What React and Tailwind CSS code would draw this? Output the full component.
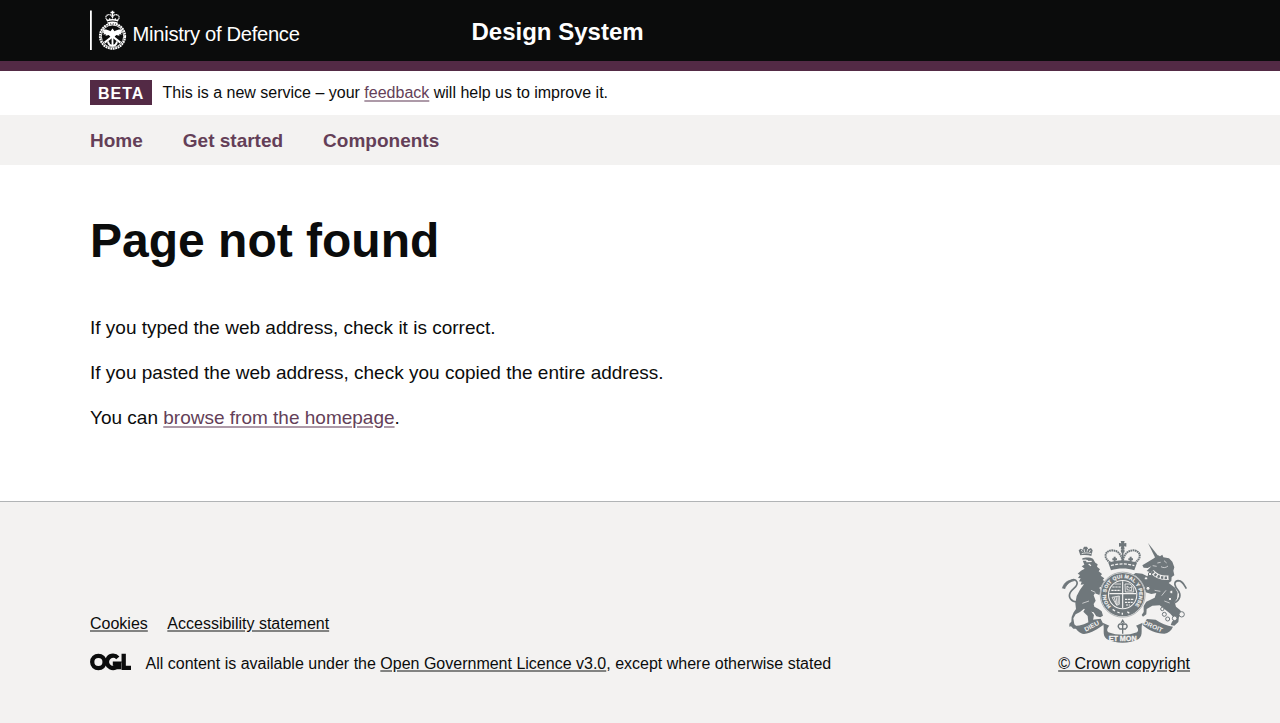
import React from "react";

const link = "underline decoration-2 underline-offset-2 decoration-[#ad9aa8] text-[#643f58]";
const footerLink = "underline decoration-2 underline-offset-1 decoration-[#828382]";

function MinistryLogo() {
  return (
    <svg width="210" height="40" viewBox="0 0 210 40" role="img" aria-label="Ministry of Defence" className="block overflow-visible">
      <rect x="0" y="0.5" width="1.8" height="39.5" fill="#fff" />
      <g fill="none" stroke="#fff">
        <circle cx="22.5" cy="26.2" r="12.6" strokeWidth="2" strokeDasharray="1.9 0.6" />
        <circle cx="22.5" cy="26.2" r="11.2" strokeWidth="0.9" />
        <path d="M22.5 0.8v6M20.5 2.6h4" strokeWidth="1.5" />
        <path d="M17.4 10.2C14.2 7.2 16.4 4 20.3 4.8c1.5.4 2.2 2 2.2 3.8 0-1.8.7-3.4 2.2-3.8 3.9-.8 6.1 2.4 2.9 5.4" strokeWidth="1.2" strokeDasharray="1.4 .35" />
        <path d="M16.9 10.7c3.2-1 8-1 11.2 0M17.5 13.1c3-1 7-1 10 0" strokeWidth="1.5" />
        <path d="M19.7 8.2v2M25.3 8.2v2" strokeWidth="1.2" />
        <path d="M22.5 24v12.5" strokeWidth="1.8" />
        <path d="M18 31.5c.5 3 2.1 4.3 4.5 4.3s4-1.3 4.5-4.3" strokeWidth="1.9" />
        <path d="M14.6 32.6l14-11M30.4 32.6l-14-11" strokeWidth="2" />
      </g>
      <path
        d="M22.5 18.6l2 2.6c2.6-1.7 5-2 8.4-1.6l-1.5 1.6 1.6 1-2.2.7 1 1.5-2.7-.2.4 1.6-3.5-.8-1.8 2.2h-3.4L19 25l-3.5.8.4-1.6-2.7.2 1-1.5-2.2-.7 1.6-1-1.5-1.6c3.4-.4 5.8-.1 8.4 1.6z"
        fill="#fff"
      />
      <text
        x="42.6"
        y="30.7"
        textLength="167"
        lengthAdjust="spacingAndGlyphs"
        fill="#fff"
        fontSize="20.4"
        letterSpacing="-0.3"
        fontFamily="'Liberation Sans', Arial, sans-serif"
      >
        Ministry of Defence
      </text>
    </svg>
  );
}

function OglLogo() {
  return (
    <svg width="42" height="18" viewBox="0 0 42 18" role="img" aria-label="OGL" className="block overflow-visible">
      <g fill="none" stroke="#0b0c0c" strokeWidth="4.3">
        <circle cx="8.4" cy="9" r="6.2" />
        <path d="M27.8 4.8A6.2 6.2 0 1 0 29.1 10.6H22.8M29.2 9.5V16.2" />
        <path d="M33.7 0.8V14.9H41" />
      </g>
    </svg>
  );
}

function RoyalArms() {
  return (
    <svg width="130" height="105" viewBox="0 0 390 315" aria-hidden="true" className="block">
      <defs>
        <path id="garter" d="M154 200A49.5 49.5 0 1 1 222 200" />
      </defs>
      <g fill="#6f777b">
        {/* lion */}
        <path d="M61 46l-5-15 6-5 6 3 4-9h9l4 8 8-4 5 7-4 17c-10-4-22-4-33-2z" />
        <path d="M66 56c10-5 25-4 33 0l7 12 7 5-2 7 9 8-4 6 10 8-4 5 11 8-5 5 10 7-8 2 9 10-5 4-10-4-6 4 5 12-5 10-13-5-4 6 6 16-6 10 2 8 13 7 9 7 4 13-8 5-12-3-8-12-17-4-12-7-12 10-13 7-7 12 3 18 9 8-2 5H40l-7-7-5 1v-9l6-6 1-14 6-14 7-10-2-17 4-22 10-19 12-16-10 1 3-9-8-1 5-9-8-1 6-9-7-4 10-9 11-6-9-7 8-5z" />
        <path d="M112 126l7-6 10 4 7 6 5 10-4 7-9-1-9-9z" />
        <path d="M76 205l15 6 11 14-3 16 8 9-13 4-9-8-2-18-13-13z" />
        {/* unicorn */}
        <path d="M264 9l29 37-7 8z" />
        <path d="M282 55l11-10 7 4 7-5 3 8 17 3 10 10 6 17-3 10 3 14-8 5-1 12-8 6 19 14 8 15-2 18-7 10 4 14 13 11 5 12-9 7-2 16-12 11-11-2 4-10 8-9-13-15-15-12-17-13-22 1-17 10-1 16-10 7-4-5 6-9v-18l8-13 25-12 5-14-15 3-17-5-4-16-12-8-9 13-12-3-3-8 12-2 9-15-12-4-11 7-7-4 4-8 15-10 20 2 15 8 8-13-10-3 14-14-11 5-12-1-4-7z" />
        {/* crown */}
        <path d="M182 3h12l-2 7 7-1v11l-7-1 2 9h-12l2-9-7 1V9l7 1z" />
        <path d="M145 68c25-10 61-10 86 0l-8 23c-22-7-48-7-70 0z" />
        <circle cx="188" cy="33" r="6" />
        {/* scrolls */}
        <path d="M44 258c19 0 37-8 54-19l24-3 9 18c-18 13-35 24-59 28-14-2-23-11-28-24z" />
        <path d="M339 260c-19-3-36-10-52-21l-26-2-14 17c19 16 40 27 66 27 12-2 21-9 26-21z" />
        <path d="M128 248l20 9c-6 7-9 13-3 20 26 10 60 10 86 0 6-7 3-13-3-20l20-9c-8 16 4 36-12 49-28 15-69 15-96 0-16-13-4-33-12-49z" />
      </g>
      <g fill="none" stroke="#6f777b">
        <path d="M52 186c-18-1-29-14-21-29 8-13 24-17 20-31-6-13-24-6-35 11" strokeWidth="5" />
        <path d="M7 145c4-17 20-29 36-23-14 3-23 10-29 25" fill="#6f777b" strokeWidth="2" />
        <path d="M344 188c17-9 20-24 10-37-10-12-15-26 0-29 14 0 18 12 25 24" strokeWidth="5" />
        <path d="M188 70V35" strokeWidth="5" />
        <path d="M151 68c-23-15-16-36 5-37 18 0 29 13 32 35 3-22 14-35 32-35 21 1 28 22 5 37" strokeWidth="6" strokeDasharray="5 1.5" />
        <path d="M164 68V50m-7 8h14M212 68V50m-7 8h14" strokeWidth="6" />
        {/* fleur-de-lis */}
        <path d="M188 248v33M188 255c-11-9-18 4-9 11M188 255c11-9 18 4 9 11M178 267h20M183 249l5-8 5 8" strokeWidth="4" />
      </g>
      {/* garter and shield */}
      <circle cx="188" cy="164" r="69" fill="#f3f2f1" />
      <circle cx="188" cy="164" r="54.5" fill="none" stroke="#6f777b" strokeWidth="21" />
      <circle cx="188" cy="164" r="67.5" fill="none" stroke="#6f777b" strokeWidth="1.5" />
      <circle cx="188" cy="164" r="41" fill="#6f777b" />
      <g fill="#f3f2f1" fontFamily="'Liberation Sans', Arial, sans-serif" fontWeight="700">
        <text fontSize="15" stroke="#f3f2f1" strokeWidth="0.5">
          <textPath href="#garter" startOffset="1" textLength="230" lengthAdjust="spacing">HONI SOIT QUI MAL Y PENSE</textPath>
        </text>
        <text fontSize="19" textLength="48" lengthAdjust="spacingAndGlyphs" transform="translate(77 275) rotate(-28)">DIEU</text>
        <text fontSize="19" textLength="62" lengthAdjust="spacingAndGlyphs" transform="translate(248 252) rotate(24)">DROIT</text>
        <text x="146" y="302" fontSize="20" textLength="84" lengthAdjust="spacingAndGlyphs" stroke="#f3f2f1" strokeWidth="0.8">ET MON</text>
      </g>
      <g fill="none" stroke="#f3f2f1">
        <path d="M148 161h80M188 124v80" strokeWidth="3.5" />
        <path d="M157 141h25M154 151h28M195 178h27M195 187h23M198 195h12" strokeWidth="3.5" strokeDasharray="7 2" />
        <path d="M163 132h20M195 132h15l11 12v12h-25z" strokeWidth="2.5" />
        <path d="M201 149v-11l8 6 6-4v12z" strokeWidth="2.5" />
        <path d="M156 172l22-4v25l-8 3zM162 171l8 24M168 170l4 24M174 169l1 22" strokeWidth="2.5" />
        <path d="M158 208l7 5M172 216l7 3M187 218v6M202 215l6 5" strokeWidth="4" />
        <path d="M65 41c8-3 20-3 29 0M67 35l-3-5M74 36l-2-9M81 35l2-8M88 36l3-6" strokeWidth="2.5" />
        <path d="M65 61l12-1 7 3M79 65l16-1M86 72l7 5" strokeWidth="3.5" />
        <path d="M292 69l10-2M278 77l12 2M303 80c7 4 14 4 21-2M312 62l8 7" strokeWidth="2" />
        <path d="M276 94c13 16 29 21 50 19" strokeWidth="13" />
        <path d="M153 77c23-7 47-7 70 0" strokeWidth="4" strokeDasharray="9 4" />
        <path d="M58 140l-8 23M93 151l13 6M67 190l20-7M318 151l-13 16M329 189l-16-6M284 151l17 3" strokeWidth="2" />
      </g>
      <path d="M276 94c13 16 29 21 50 19" fill="none" stroke="#6f777b" strokeWidth="8" strokeDasharray="7 4" />
      <g fill="#f3f2f1" stroke="#6f777b" strokeWidth="3">
        <circle cx="270" cy="102" r="5" />
        <circle cx="258" cy="115" r="5" />
        <circle cx="264" cy="145" r="6" />
        <circle cx="334" cy="156" r="5" />
        <circle cx="330" cy="177" r="5" />
        <circle cx="307" cy="207" r="5" />
        <circle cx="313" cy="223" r="6" />
        <circle cx="323" cy="237" r="6" />
        <circle cx="344" cy="235" r="7" />
        <circle cx="365" cy="223" r="8" />
      </g>
    </svg>
  );
}

export default function App() {
  return (
    <div className="flex h-[723px] flex-col bg-white font-['Liberation_Sans',Arial,sans-serif] text-[#0b0c0c]">
      <header className="h-[71px] shrink-0 border-b-10 border-[#532a45] bg-[#0b0c0c] px-[90px]">
        <div className="flex pt-[10px] text-white">
          <div className="w-[381.5px]">
            <MinistryLogo />
          </div>
          <div className="pt-[7px] text-[24px] leading-[30px] font-bold">Design System</div>
        </div>
      </header>

      <div className="flex h-[44px] shrink-0 items-start px-[90px] pt-[9px]">
        <strong className="mr-[10px] flex h-[25px] w-[62px] items-center bg-[#532a45] pt-[2px] pl-2 text-[16px] leading-4 tracking-[1px] text-white">
          BETA
        </strong>
        <span className="mt-[3px] pl-[0.5px] text-[16px] leading-5">
          This is a new service – your{" "}
          <a href="#feedback" className={link}>feedback</a> will help us to improve it.
        </span>
      </div>

      <nav className="flex h-[50px] shrink-0 items-center gap-10 bg-[#f3f2f1] px-[90px] text-[19px] leading-[25px] font-bold text-[#643f58]">
        <a href="#home">Home</a>
        <a href="#start">Get started</a>
        <a href="#components">Components</a>
      </nav>

      <main className="h-[336px] shrink-0 px-[90px] pt-[51px] text-[19px] leading-[25px]">
        <h1 className="mb-[49px] text-[48px] leading-[50px] font-bold">Page not found</h1>
        <p className="mb-5">If you typed the web address, check it is correct.</p>
        <p className="mb-5">If you pasted the web address, check you copied the entire address.</p>
        <p>
          You can <a href="#home" className={link}>browse from the homepage</a>.
        </p>
      </main>

      <footer className="flex flex-1 justify-between border-t border-[#b1b4b6] bg-[#f3f2f1] px-[90px] pt-[38px] text-[16px] leading-5">
        <div className="pt-[74px]">
          <div className="flex gap-[19.5px]">
            <a href="#cookies" className={footerLink}>Cookies</a>
            <a href="#accessibility" className={footerLink}>Accessibility statement</a>
          </div>
          <div className="mt-5 flex">
            <div className="-mt-px w-[55.5px]">
              <OglLogo />
            </div>
            <p>
              All content is available under the{" "}
              <a href="#licence" className={footerLink}>Open Government Licence v3.0</a>, except where otherwise stated
            </p>
          </div>
        </div>
        <div className="flex flex-col items-end">
          <RoyalArms />
          <a href="#copyright" className={`${footerLink} mt-[9px]`}>© Crown copyright</a>
        </div>
      </footer>
    </div>
  );
}
